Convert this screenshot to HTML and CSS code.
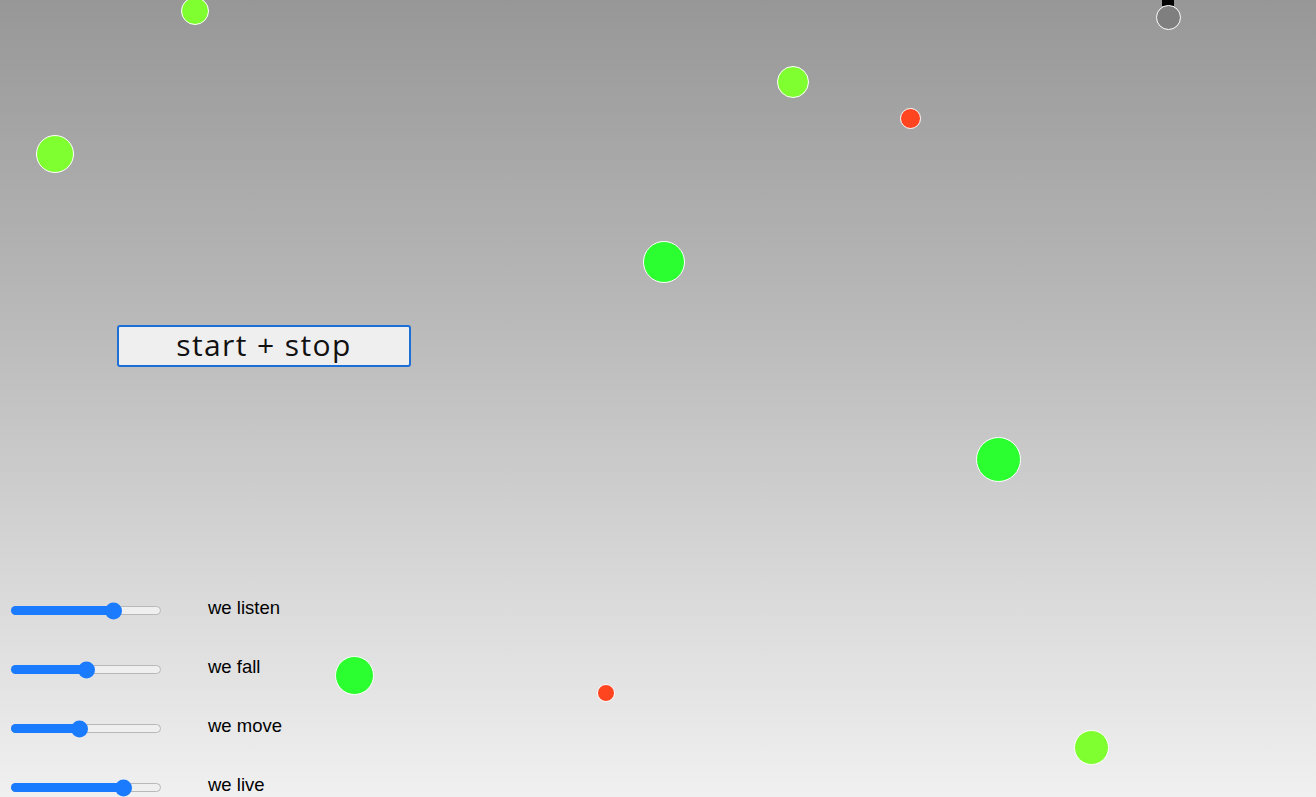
FILE: index.html
```html
<!DOCTYPE html>
<html lang="en">
<head>
<meta charset="utf-8">
<title>we listen</title>
<link rel="stylesheet" href="styles.css">
</head>
<body>
<div class="canvas">
  <div class="string"></div>
  <div class="ball ball-grey" style="left:1156px;top:5px;width:25px;height:25px"></div>
  <div class="ball ball-lime" style="left:181px;top:-3px;width:28px;height:28px"></div>
  <div class="ball ball-lime" style="left:777px;top:66px;width:32px;height:32px"></div>
  <div class="ball ball-red" style="left:900px;top:108px;width:21px;height:21px"></div>
  <div class="ball ball-lime" style="left:36px;top:135px;width:38px;height:38px"></div>
  <div class="ball ball-green" style="left:643px;top:241px;width:42px;height:42px"></div>
  <div class="ball ball-green" style="left:976px;top:437px;width:45px;height:45px"></div>
  <div class="ball ball-green" style="left:335px;top:656px;width:39px;height:39px"></div>
  <div class="ball ball-red" style="left:597px;top:684px;width:18px;height:18px"></div>
  <div class="ball ball-lime" style="left:1074px;top:730px;width:35px;height:35px"></div>
</div>

<main class="page">
  <button class="toggle" type="button">start + stop</button>

  <div class="sliders">
    <div class="row">
      <span class="range"><span class="fill" style="width:68%"></span><span class="thumb" style="left:68%"></span></span>
      <span class="label">we listen</span>
    </div>
    <div class="row">
      <span class="range"><span class="fill" style="width:50%"></span><span class="thumb" style="left:50%"></span></span>
      <span class="label">we fall</span>
    </div>
    <div class="row">
      <span class="range"><span class="fill" style="width:45%"></span><span class="thumb" style="left:45%"></span></span>
      <span class="label">we move</span>
    </div>
    <div class="row">
      <span class="range"><span class="fill" style="width:75%"></span><span class="thumb" style="left:75%"></span></span>
      <span class="label">we live</span>
    </div>
  </div>
</main>
</body>
</html>
```

FILE: styles.css
```css
html, body {
  margin: 0;
  padding: 0;
}

body {
  width: 1316px;
  height: 797px;
  overflow: hidden;
  position: relative;
  background: linear-gradient(to bottom, #979797 0%, #b9b9b9 40%, #dadada 75%, #f0f0f0 100%);
  font-family: "Liberation Sans", Arial, sans-serif;
}

.canvas {
  position: absolute;
  inset: 0;
  pointer-events: none;
}

.ball {
  position: absolute;
  box-sizing: border-box;
  border-radius: 50%;
  border: 1.5px solid #ffffff;
}

.ball-lime { background: #80ff30; }
.ball-green { background: #2cff2f; }
.ball-red { background: #ff4420; }
.ball-grey { background: #7f7f7f; }

.string {
  position: absolute;
  left: 1162px;
  top: 0;
  width: 12px;
  height: 6px;
  background: #000;
}

.page {
  position: relative;
  display: flex;
  flex-direction: column;
  align-items: flex-start;
}

.toggle {
  margin: 325px 0 0 117px;
  width: 294px;
  height: 42px;
  box-sizing: border-box;
  border: 2px solid #1b6fd6;
  border-radius: 3px;
  background: #efefef;
  color: #111;
  font-family: "Open Sans", sans-serif;
  font-size: 30px;
  letter-spacing: 1.4px;
  line-height: 36px;
  padding: 0 0 2px 0;
  text-align: center;
}

.sliders {
  margin-top: 214px;
  display: flex;
  flex-direction: column;
}

.row {
  height: 59px;
  display: flex;
  align-items: center;
}

.range {
  position: relative;
  margin-left: 11px;
  width: 150px;
  height: 9px;
  box-sizing: border-box;
  border: 1px solid #b8b8b8;
  border-radius: 5px;
  background: #efefef;
}

.fill {
  position: absolute;
  left: -1px;
  top: -1px;
  bottom: -1px;
  background: #1a7bff;
  border-radius: 5px 0 0 5px;
}

.thumb {
  position: absolute;
  top: 50%;
  width: 17px;
  height: 17px;
  margin-left: -8px;
  transform: translateY(-50%);
  border-radius: 50%;
  background: #1a7bff;
}

.label {
  margin-left: 47px;
  margin-top: -6px;
  font-size: 18.5px;
  color: #000;
}
```
